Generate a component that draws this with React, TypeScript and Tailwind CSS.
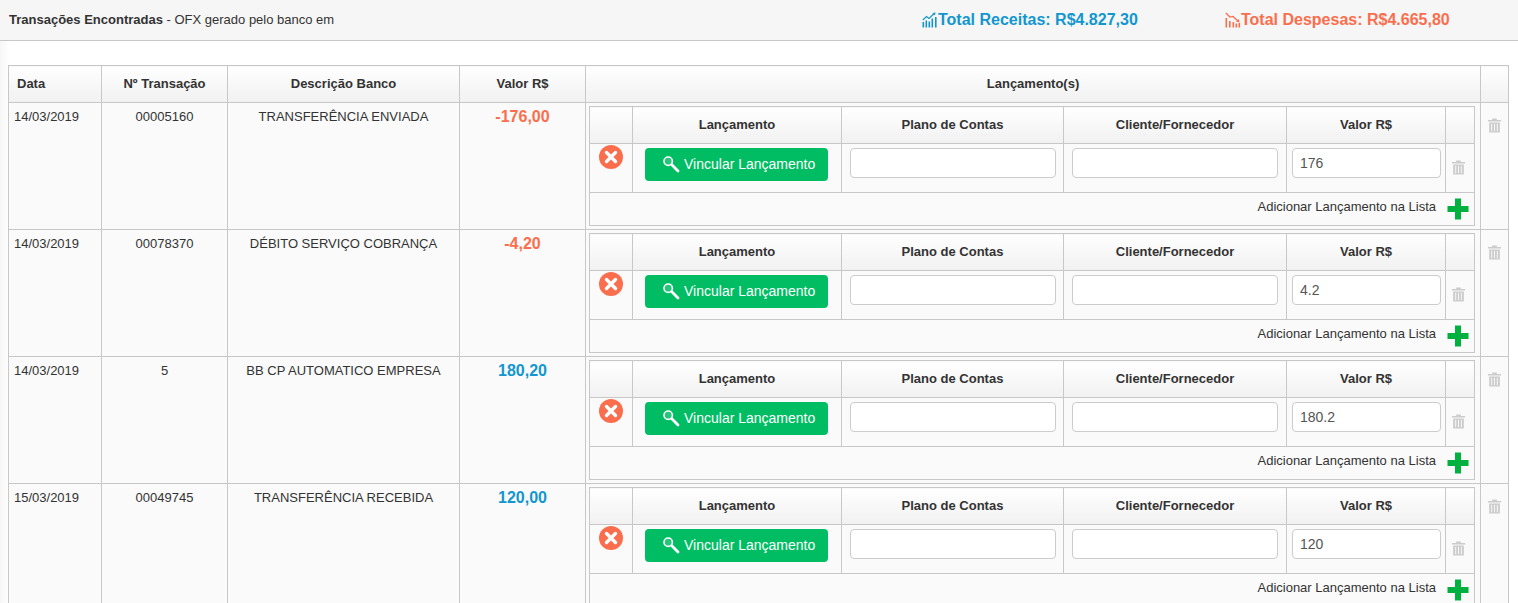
const rows = [
  { data: "14/03/2019", numero: "00005160", descricao: "TRANSFERÊNCIA ENVIADA", valor: "-176,00", input: "176", negativo: true },
  { data: "14/03/2019", numero: "00078370", descricao: "DÉBITO SERVIÇO COBRANÇA", valor: "-4,20", input: "4.2", negativo: true },
  { data: "14/03/2019", numero: "5", descricao: "BB CP AUTOMATICO EMPRESA", valor: "180,20", input: "180.2", negativo: false },
  { data: "15/03/2019", numero: "00049745", descricao: "TRANSFERÊNCIA RECEBIDA", valor: "120,00", input: "120", negativo: false },
]

const thBase = "border border-[#c8c8c8] bg-gradient-to-b from-white to-[#f1f1f1] text-[13px] font-bold text-[#333]"
const tdBase = "border border-[#c8c8c8] align-top"

function ChartUp() {
  return (
    <svg width="16" height="16" viewBox="0 0 16 16" fill="#1296cf" className="shrink-0">
      <rect x="0.5" y="10" width="1.6" height="5.5" />
      <rect x="3.5" y="8.5" width="1.6" height="7" />
      <rect x="6.5" y="9.5" width="1.6" height="6" />
      <rect x="9.5" y="6.5" width="1.6" height="9" />
      <rect x="13" y="5" width="1.6" height="10.5" />
      <path d="M0.8 8 L4.5 4.5 L7 6.5 L12 1.8" stroke="#1296cf" strokeWidth="1.2" fill="none" />
      <path d="M10.5 1 L13.5 0.5 L13 3.5 Z" />
    </svg>
  )
}

function ChartDown() {
  return (
    <svg width="16" height="16" viewBox="0 0 16 16" fill="#fb6e4d" className="shrink-0">
      <rect x="0.5" y="6" width="1.6" height="9.5" />
      <rect x="4" y="9" width="1.6" height="6.5" />
      <rect x="7.5" y="10" width="1.6" height="5.5" />
      <rect x="10.5" y="11.5" width="1.6" height="4" />
      <rect x="13.5" y="11" width="1.6" height="4.5" />
      <path d="M0.8 1 L5 5 L8 4.5 L13 9" stroke="#fb6e4d" strokeWidth="1.2" fill="none" />
      <path d="M11 9.5 L14.5 10.5 L13.8 7 Z" />
    </svg>
  )
}

function Trash() {
  return (
    <svg width="15" height="15" viewBox="0 0 15 16" fill="#cccccc" className="block">
      <path d="M5 0.5 H10 V2 H14.5 V3.8 H0.5 V2 H5 Z" />
      <path d="M1.8 4.8 H13.2 V15.5 H1.8 Z M4 6 V14 H5 V6 Z M7 6 V14 H8 V6 Z M10 6 V14 H11 V6 Z" fillRule="evenodd" />
    </svg>
  )
}

function RemoveIcon() {
  return (
    <svg width="24" height="24" viewBox="0 0 24 24" className="block">
      <circle cx="12" cy="12" r="12" fill="#fb6e4d" />
      <path d="M7.5 7.5 L16.5 16.5 M16.5 7.5 L7.5 16.5" stroke="#fff" strokeWidth="3.4" strokeLinecap="round" />
    </svg>
  )
}

function SearchIcon() {
  return (
    <svg width="18" height="18" viewBox="0 0 18 18" fill="none" className="shrink-0">
      <circle cx="6.2" cy="6.2" r="4.2" stroke="#fff" strokeWidth="1.6" fill="#ffffff" fillOpacity="0.15" />
      <path d="M9.8 9.8 L16 16" stroke="#fff" strokeWidth="2.8" strokeLinecap="round" />
    </svg>
  )
}

function PlusIcon() {
  return (
    <svg width="22" height="22" viewBox="0 0 22 22" className="mt-[1px] block">
      <path d="M8 0.5 H14 V8 H21.5 V14 H14 V21.5 H8 V14 H0.5 V8 H8 Z" fill="#00b140" />
    </svg>
  )
}

function InnerTable({ valor }: { valor: string }) {
  return (
    <table className="w-[885px] table-fixed border-collapse">
      <colgroup>
        <col className="w-[43px]" />
        <col className="w-[209px]" />
        <col className="w-[222px]" />
        <col className="w-[223px]" />
        <col className="w-[159px]" />
        <col className="w-[29px]" />
      </colgroup>
      <thead>
        <tr className="h-[37px]">
          <th className={thBase}></th>
          <th className={thBase}>Lançamento</th>
          <th className={thBase}>Plano de Contas</th>
          <th className={thBase}>Cliente/Fornecedor</th>
          <th className={thBase}>Valor R$</th>
          <th className={thBase}></th>
        </tr>
      </thead>
      <tbody>
        <tr className="h-[49px]">
          <td className={`${tdBase} pt-[1px] pl-[9px]`}>
            <RemoveIcon />
          </td>
          <td className={`${tdBase} pt-[4px] pl-[12px]`}>
            <button className="flex h-[33px] w-[183px] items-center gap-[4px] rounded bg-[#00bd63] pb-[1px] pl-[17px] text-sm text-white">
              <SearchIcon />
              Vincular Lançamento
            </button>
          </td>
          <td className={`${tdBase} pt-[4px] pl-[8px]`}>
            <input className="block h-[30px] w-[206px] rounded border border-[#cccccc] bg-white px-3 text-sm text-[#555]" />
          </td>
          <td className={`${tdBase} pt-[4px] pl-[8px]`}>
            <input className="block h-[30px] w-[206px] rounded border border-[#cccccc] bg-white px-3 text-sm text-[#555]" />
          </td>
          <td className={`${tdBase} pt-[4px] pl-[5px]`}>
            <input
              defaultValue={valor}
              className="block h-[30px] w-[149px] rounded border border-[#cccccc] bg-white px-[7px] text-sm text-[#555]"
            />
          </td>
          <td className={`${tdBase} pt-[16px] pl-[5px]`}>
            <Trash />
          </td>
        </tr>
        <tr className="h-[33px]">
          <td colSpan={6} className={`${tdBase} pr-[5px]`}>
            <div className="flex items-start justify-end gap-[11px] pt-[4px] text-[13px] text-[#333]">
              <span>Adicionar Lançamento na Lista</span>
              <PlusIcon />
            </div>
          </td>
        </tr>
      </tbody>
    </table>
  )
}

export default function App() {
  return (
    <div className="h-screen overflow-hidden bg-white font-['Liberation_Sans',Arial,sans-serif] text-[13px] text-[#333]">
      <div className="flex h-[41px] items-center border-b border-[#c8c8c8] bg-[#f6f6f6] pb-[1px] pl-[9px]">
        <div className="w-[913px] shrink-0">
          <span className="font-bold">Transações Encontradas</span> - OFX gerado pelo banco em
        </div>
        <div className="flex w-[303px] shrink-0 items-center text-base font-bold text-[#1296cf]">
          <ChartUp />
          Total Receitas: R$4.827,30
        </div>
        <div className="flex shrink-0 items-center text-base font-bold text-[#fb6e4d]">
          <ChartDown />
          Total Despesas: R$4.665,80
        </div>
      </div>

      <div className="h-full bg-[linear-gradient(to_right,#f7f7f7,#ffffff_10px)] px-2 pt-[24px]">
        <table className="w-[1500px] table-fixed border-collapse bg-white">
          <colgroup>
            <col className="w-[93px]" />
            <col className="w-[126px]" />
            <col className="w-[232px]" />
            <col className="w-[126px]" />
            <col className="w-[895px]" />
            <col className="w-[28px]" />
          </colgroup>
          <thead>
            <tr className="h-[37px]">
              <th className={`${thBase} pb-[1px] pl-2 text-left`}>Data</th>
              <th className={`${thBase} pb-[1px]`}>Nº Transação</th>
              <th className={`${thBase} pb-[1px]`}>Descrição Banco</th>
              <th className={`${thBase} pb-[1px]`}>Valor R$</th>
              <th className={`${thBase} pb-[1px]`}>Lançamento(s)</th>
              <th className={thBase}></th>
            </tr>
          </thead>
          <tbody>
            {rows.map((row, i) => (
              <tr key={i} className="h-[127px] bg-[#fafafa]">
                <td className={`${tdBase} pt-[4px] pl-[5px]`}>{row.data}</td>
                <td className={`${tdBase} pt-[4px] text-center`}>{row.numero}</td>
                <td className={`${tdBase} pt-[4px] text-center`}>{row.descricao}</td>
                <td
                  className={`${tdBase} pt-[2px] text-center text-base font-bold ${
                    row.negativo ? "text-[#fb6e4d]" : "text-[#1296cf]"
                  }`}
                >
                  {row.valor}
                </td>
                <td className={`${tdBase} pt-[3px] pl-[3px]`}>
                  <InnerTable valor={row.input} />
                </td>
                <td className={`${tdBase} pt-[15px] pl-[6px]`}>
                  <Trash />
                </td>
              </tr>
            ))}
          </tbody>
        </table>
      </div>
    </div>
  )
}
